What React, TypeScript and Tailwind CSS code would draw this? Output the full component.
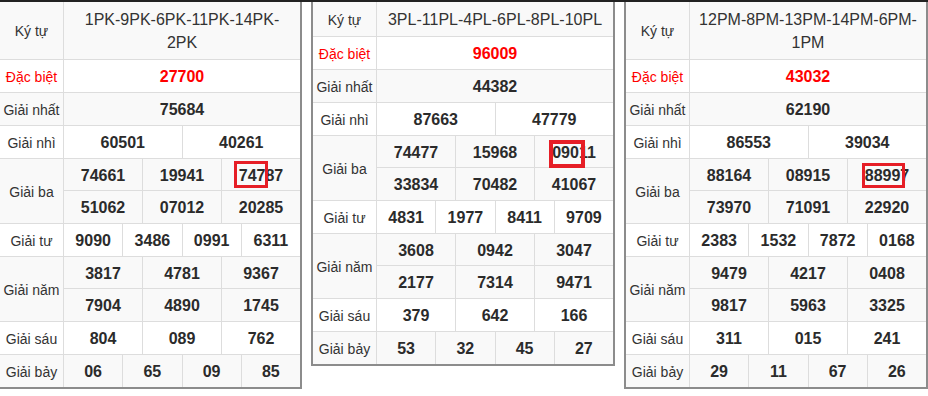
import React from "react";

type Board = {
  header: string[];
  headerH: string;
  db: string;
  nhat: string;
  nhi: string[];
  ba: string[][];
  tu: string[];
  nam: string[][];
  sau: string[];
  bay: string[];
  mark: string;
};

const boards: Board[] = [
  {
    header: ["1PK-9PK-6PK-11PK-14PK-", "2PK"],
    headerH: "h-[58px]",
    db: "27700",
    nhat: "75684",
    nhi: ["60501", "40261"],
    ba: [
      ["74661", "19941", "74787"],
      ["51062", "07012", "20285"],
    ],
    tu: ["9090", "3486", "0991", "6311"],
    nam: [
      ["3817", "4781", "9367"],
      ["7904", "4890", "1745"],
    ],
    sau: ["804", "089", "762"],
    bay: ["06", "65", "09", "85"],
    mark: "left-[12px] top-[2px] w-[34px] h-[27px] border-[3px]",
  },
  {
    header: ["3PL-11PL-4PL-6PL-8PL-10PL"],
    headerH: "h-[35px]",
    db: "96009",
    nhat: "44382",
    nhi: ["87663", "47779"],
    ba: [
      ["74477", "15968", "09011"],
      ["33834", "70482", "41067"],
    ],
    tu: ["4831", "1977", "8411", "9709"],
    nam: [
      ["3608", "0942", "3047"],
      ["2177", "7314", "9471"],
    ],
    sau: ["379", "642", "166"],
    bay: ["53", "32", "45", "27"],
    mark: "left-[14px] top-[4px] w-[36px] h-[28px] border-4",
  },
  {
    header: ["12PM-8PM-13PM-14PM-6PM-", "1PM"],
    headerH: "h-[58px]",
    db: "43032",
    nhat: "62190",
    nhi: ["86553", "39034"],
    ba: [
      ["88164", "08915", "88997"],
      ["73970", "71091", "22920"],
    ],
    tu: ["2383", "1532", "7872", "0168"],
    nam: [
      ["9479", "4217", "0408"],
      ["9817", "5963", "3325"],
    ],
    sau: ["311", "015", "241"],
    bay: ["29", "11", "67", "26"],
    mark: "left-[14px] top-[4px] w-[43px] h-[25px] border-[3px]",
  },
];

const Row = ({
  label,
  lines,
  bg,
  red,
  last,
  mark,
}: {
  label: string;
  lines: string[][];
  bg: string;
  red?: boolean;
  last?: boolean;
  mark?: string;
}) => (
  <div className={`flex ${bg} ${last ? "" : "border-b border-[#ddd]"}`}>
    <div
      className={`w-[64px] shrink-0 border-r border-[#ddd] flex items-center justify-center pt-[2px] text-[14px] ${
        red ? "text-[#f00]" : "text-[#333]"
      }`}
    >
      {label}
    </div>
    <div className="flex-1 flex flex-col">
      {lines.map((line, i) => (
        <div
          key={i}
          className={`flex h-[32px] ${i < lines.length - 1 ? "border-b border-[#ddd]" : ""}`}
        >
          {line.map((n, j) => (
            <div
              key={j}
              className={`relative flex-1 basis-0 flex items-center justify-center pt-[2px] font-bold text-[16px] ${
                j > 0 ? "border-l border-[#ddd]" : ""
              } ${red ? "text-[#f00]" : "text-[#2b2b2b]"}`}
            >
              {n}
              {mark && i === 0 && j === 2 && (
                <div className={`absolute border-[#e61e26] ${mark}`}></div>
              )}
            </div>
          ))}
        </div>
      ))}
    </div>
  </div>
);

const Table = ({ b }: { b: Board }) => (
  <div className="w-[304px] shrink-0 border-x-2 border-b-2 border-[#8c8c8c]">
    <div className={`flex bg-[#f9f9f9] border-b border-[#ddd] ${b.headerH}`}>
      <div className="w-[64px] shrink-0 border-r border-[#ddd] flex items-center justify-center pt-[2px] text-[14px] text-[#333]">
        Ký tự
      </div>
      <div className="flex-1 flex flex-col items-center justify-center px-[6px] pt-[2px] text-[16px] leading-[22.8px] text-[#333] text-center">
        {b.header.map((h, i) => (
          <span key={i}>{h}</span>
        ))}
      </div>
    </div>
    <Row label="Đặc biệt" lines={[[b.db]]} bg="bg-white" red />
    <Row label="Giải nhất" lines={[[b.nhat]]} bg="bg-[#f9f9f9]" />
    <Row label="Giải nhì" lines={[b.nhi]} bg="bg-white" />
    <Row label="Giải ba" lines={b.ba} bg="bg-[#f9f9f9]" mark={b.mark} />
    <Row label="Giải tư" lines={[b.tu]} bg="bg-white" />
    <Row label="Giải năm" lines={b.nam} bg="bg-[#f9f9f9]" />
    <Row label="Giải sáu" lines={[b.sau]} bg="bg-white" />
    <Row label="Giải bảy" lines={[b.bay]} bg="bg-[#f9f9f9]" last />
  </div>
);

const App = () => {
  return (
    <div className="w-[928px] h-[396px] overflow-hidden bg-white font-['Liberation_Sans',Arial,sans-serif]">
      <div className="h-[2px] w-full bg-[#222]"></div>
      <div className="flex items-start gap-[9px] -ml-[2px]">
        {boards.map((b, i) => (
          <Table key={i} b={b} />
        ))}
      </div>
    </div>
  );
};

export default App;
